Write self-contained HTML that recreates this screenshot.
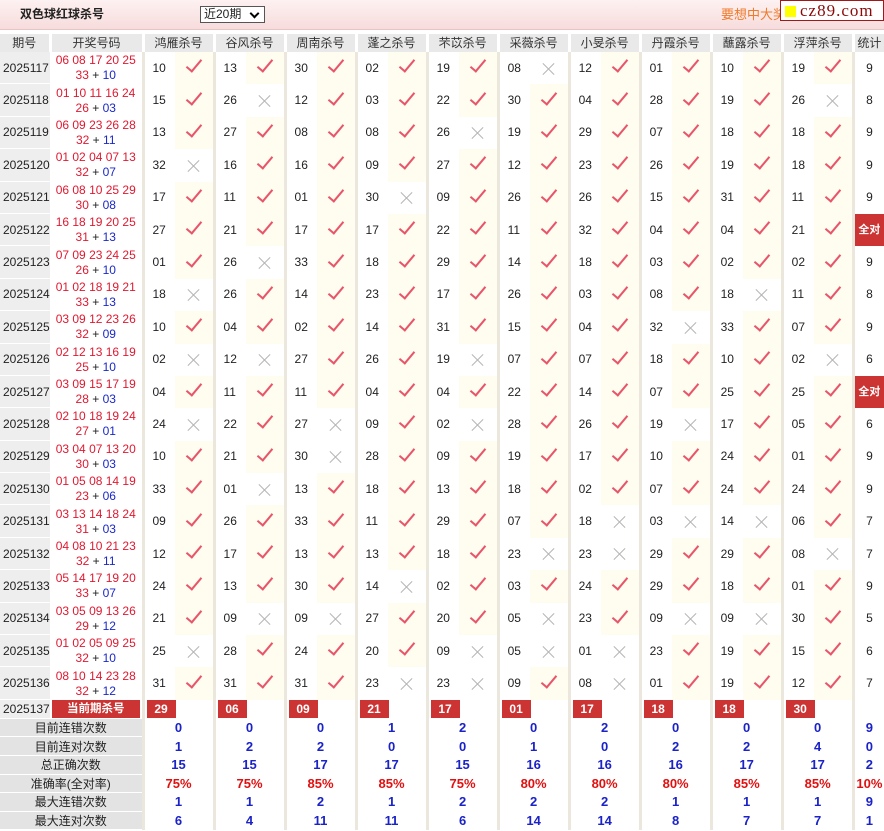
<!DOCTYPE html>
<html><head><meta charset="utf-8"><style>
body{margin:0;width:884px;height:831px;overflow:hidden;background:#fff;font-family:"Liberation Sans","Noto Sans CJK SC",sans-serif;font-size:12px;color:#222;position:relative}
.top{position:absolute;left:0;top:0;width:884px;height:29px;background:linear-gradient(#fdf1f1,#f7dcdc);border-bottom:1px solid #e6c5c5}
.ttl{position:absolute;left:20px;top:6px;font-weight:bold;font-size:12px;color:#222;line-height:16px}
.sel{position:absolute;left:200px;top:6px;width:60px;height:15px;border:1px solid #555;background:#fff;font-size:12px;line-height:15px;padding-left:3px}
.sel:after{content:"";position:absolute;right:6px;top:3px;width:5px;height:5px;border:solid #000;border-width:0 2px 2px 0;transform:rotate(45deg)}
.ad{position:absolute;left:721px;top:7px;color:#f07a2a;font-size:13px;line-height:16px}
.logo{position:absolute;left:780px;top:0;width:102px;height:19px;border:1px solid #a01818;background:#fff;font-family:"Liberation Serif",serif;font-size:17px;color:#8a0a0a;line-height:19px;letter-spacing:1px}
.logo i{display:inline-block;width:11px;height:11px;background:#ffff00;margin:0 4px 0 4px;vertical-align:-1px}
table{position:absolute;left:0;top:34px;border-collapse:collapse;table-layout:fixed;width:884px}
td{padding:0;white-space:nowrap;overflow:hidden}
tr.hd td{height:18px;line-height:16px;background:#e9e9e9;text-align:center;border-left:3px solid #fff;color:#333}
tr.hd td:first-child{border-left:0}
tr.r td{height:32.4px;line-height:15px}
td.q{background:#eeeeee;box-shadow:inset 0 -1px #fff;padding-left:3px;color:#222}
td.k{text-align:center;color:#e01830;font-size:12px}
td.k span{color:#222}
td.k b{font-weight:normal;color:#1a28c8}
td.n{border-left:3px solid #ebe7dc;padding-left:8px}
td.m{text-align:center}
td.y{background:#fffdef}
td.t{text-align:center;border-left:3px solid #ebe7dc}
.c{display:inline-block;width:6px;height:14px;border:solid #e8556a;border-width:0 2px 2px 0;transform:rotate(40deg);margin-top:-4px}
.x{display:inline-block;width:14px;height:14px;position:relative;vertical-align:middle}
.x:before,.x:after{content:"";position:absolute;left:6px;top:-1px;width:1px;height:16px;background:#b5b5b5;transform:rotate(45deg)}
.x:after{transform:rotate(-45deg)}
.qd{display:block;background:#cc3333;color:#fff;font-weight:bold;text-align:center;height:18px;line-height:18px;margin:0 2px;font-size:11.5px}
.all{background:#cc3333;color:#fff;font-weight:bold;font-size:11px}
tr.cur td{height:19px;line-height:18px}
td.rn{border-left:3px solid #ebe7dc;padding-left:2px}
td.rn span{display:inline-block;width:29px;height:18px;background:#cc3333;color:#fff;font-weight:bold;text-align:center;line-height:18px;vertical-align:top}
tr.s td{height:18.6px;line-height:16px;text-align:center}
td.l{background:#e3e3e3;box-shadow:inset 0 -1px #fff;color:#222}
td.v{border-left:3px solid #ebe7dc;color:#1a22c8;font-weight:bold;font-size:13px}
td.p{color:#e01010}
</style></head><body>
<div class="top"><div class="ttl">双色球红球杀号</div><div class="sel">近20期</div><div class="ad">要想中大奖</div></div>
<div class="logo"><i></i>cz89.com</div>
<table>
<colgroup><col style="width:50px"><col style="width:93px"><col style="width:32px"><col style="width:39px"><col style="width:32px"><col style="width:39px"><col style="width:32px"><col style="width:39px"><col style="width:32px"><col style="width:39px"><col style="width:32px"><col style="width:39px"><col style="width:32px"><col style="width:39px"><col style="width:32px"><col style="width:39px"><col style="width:32px"><col style="width:39px"><col style="width:32px"><col style="width:39px"><col style="width:32px"><col style="width:39px"><col style="width:31px"></colgroup>
<tr class="hd"><td>期号</td><td>开奖号码</td><td colspan="2">鸿雁杀号</td><td colspan="2">谷风杀号</td><td colspan="2">周南杀号</td><td colspan="2">蓬之杀号</td><td colspan="2">芣苡杀号</td><td colspan="2">采薇杀号</td><td colspan="2">小旻杀号</td><td colspan="2">丹霞杀号</td><td colspan="2">蘸露杀号</td><td colspan="2">浮萍杀号</td><td>统计</td></tr>

<tr class="r"><td class="q">2025117</td><td class="k">06 08 17 20 25<br>33 <span>+</span> <b>10</b></td><td class="n">10</td><td class="m y"><i class="c"></i></td><td class="n">13</td><td class="m y"><i class="c"></i></td><td class="n">30</td><td class="m y"><i class="c"></i></td><td class="n">02</td><td class="m y"><i class="c"></i></td><td class="n">19</td><td class="m y"><i class="c"></i></td><td class="n">08</td><td class="m"><i class="x"></i></td><td class="n">12</td><td class="m y"><i class="c"></i></td><td class="n">01</td><td class="m y"><i class="c"></i></td><td class="n">10</td><td class="m y"><i class="c"></i></td><td class="n">19</td><td class="m y"><i class="c"></i></td><td class="t">9</td></tr>
<tr class="r"><td class="q">2025118</td><td class="k">01 10 11 16 24<br>26 <span>+</span> <b>03</b></td><td class="n">15</td><td class="m y"><i class="c"></i></td><td class="n">26</td><td class="m"><i class="x"></i></td><td class="n">12</td><td class="m y"><i class="c"></i></td><td class="n">03</td><td class="m y"><i class="c"></i></td><td class="n">22</td><td class="m y"><i class="c"></i></td><td class="n">30</td><td class="m y"><i class="c"></i></td><td class="n">04</td><td class="m y"><i class="c"></i></td><td class="n">28</td><td class="m y"><i class="c"></i></td><td class="n">19</td><td class="m y"><i class="c"></i></td><td class="n">26</td><td class="m"><i class="x"></i></td><td class="t">8</td></tr>
<tr class="r"><td class="q">2025119</td><td class="k">06 09 23 26 28<br>32 <span>+</span> <b>11</b></td><td class="n">13</td><td class="m y"><i class="c"></i></td><td class="n">27</td><td class="m y"><i class="c"></i></td><td class="n">08</td><td class="m y"><i class="c"></i></td><td class="n">08</td><td class="m y"><i class="c"></i></td><td class="n">26</td><td class="m"><i class="x"></i></td><td class="n">19</td><td class="m y"><i class="c"></i></td><td class="n">29</td><td class="m y"><i class="c"></i></td><td class="n">07</td><td class="m y"><i class="c"></i></td><td class="n">18</td><td class="m y"><i class="c"></i></td><td class="n">18</td><td class="m y"><i class="c"></i></td><td class="t">9</td></tr>
<tr class="r"><td class="q">2025120</td><td class="k">01 02 04 07 13<br>32 <span>+</span> <b>07</b></td><td class="n">32</td><td class="m"><i class="x"></i></td><td class="n">16</td><td class="m y"><i class="c"></i></td><td class="n">16</td><td class="m y"><i class="c"></i></td><td class="n">09</td><td class="m y"><i class="c"></i></td><td class="n">27</td><td class="m y"><i class="c"></i></td><td class="n">12</td><td class="m y"><i class="c"></i></td><td class="n">23</td><td class="m y"><i class="c"></i></td><td class="n">26</td><td class="m y"><i class="c"></i></td><td class="n">19</td><td class="m y"><i class="c"></i></td><td class="n">18</td><td class="m y"><i class="c"></i></td><td class="t">9</td></tr>
<tr class="r"><td class="q">2025121</td><td class="k">06 08 10 25 29<br>30 <span>+</span> <b>08</b></td><td class="n">17</td><td class="m y"><i class="c"></i></td><td class="n">11</td><td class="m y"><i class="c"></i></td><td class="n">01</td><td class="m y"><i class="c"></i></td><td class="n">30</td><td class="m"><i class="x"></i></td><td class="n">09</td><td class="m y"><i class="c"></i></td><td class="n">26</td><td class="m y"><i class="c"></i></td><td class="n">26</td><td class="m y"><i class="c"></i></td><td class="n">15</td><td class="m y"><i class="c"></i></td><td class="n">31</td><td class="m y"><i class="c"></i></td><td class="n">11</td><td class="m y"><i class="c"></i></td><td class="t">9</td></tr>
<tr class="r"><td class="q">2025122</td><td class="k">16 18 19 20 25<br>31 <span>+</span> <b>13</b></td><td class="n">27</td><td class="m y"><i class="c"></i></td><td class="n">21</td><td class="m y"><i class="c"></i></td><td class="n">17</td><td class="m y"><i class="c"></i></td><td class="n">17</td><td class="m y"><i class="c"></i></td><td class="n">22</td><td class="m y"><i class="c"></i></td><td class="n">11</td><td class="m y"><i class="c"></i></td><td class="n">32</td><td class="m y"><i class="c"></i></td><td class="n">04</td><td class="m y"><i class="c"></i></td><td class="n">04</td><td class="m y"><i class="c"></i></td><td class="n">21</td><td class="m y"><i class="c"></i></td><td class="t all">全对</td></tr>
<tr class="r"><td class="q">2025123</td><td class="k">07 09 23 24 25<br>26 <span>+</span> <b>10</b></td><td class="n">01</td><td class="m y"><i class="c"></i></td><td class="n">26</td><td class="m"><i class="x"></i></td><td class="n">33</td><td class="m y"><i class="c"></i></td><td class="n">18</td><td class="m y"><i class="c"></i></td><td class="n">29</td><td class="m y"><i class="c"></i></td><td class="n">14</td><td class="m y"><i class="c"></i></td><td class="n">18</td><td class="m y"><i class="c"></i></td><td class="n">03</td><td class="m y"><i class="c"></i></td><td class="n">02</td><td class="m y"><i class="c"></i></td><td class="n">02</td><td class="m y"><i class="c"></i></td><td class="t">9</td></tr>
<tr class="r"><td class="q">2025124</td><td class="k">01 02 18 19 21<br>33 <span>+</span> <b>13</b></td><td class="n">18</td><td class="m"><i class="x"></i></td><td class="n">26</td><td class="m y"><i class="c"></i></td><td class="n">14</td><td class="m y"><i class="c"></i></td><td class="n">23</td><td class="m y"><i class="c"></i></td><td class="n">17</td><td class="m y"><i class="c"></i></td><td class="n">26</td><td class="m y"><i class="c"></i></td><td class="n">03</td><td class="m y"><i class="c"></i></td><td class="n">08</td><td class="m y"><i class="c"></i></td><td class="n">18</td><td class="m"><i class="x"></i></td><td class="n">11</td><td class="m y"><i class="c"></i></td><td class="t">8</td></tr>
<tr class="r"><td class="q">2025125</td><td class="k">03 09 12 23 26<br>32 <span>+</span> <b>09</b></td><td class="n">10</td><td class="m y"><i class="c"></i></td><td class="n">04</td><td class="m y"><i class="c"></i></td><td class="n">02</td><td class="m y"><i class="c"></i></td><td class="n">14</td><td class="m y"><i class="c"></i></td><td class="n">31</td><td class="m y"><i class="c"></i></td><td class="n">15</td><td class="m y"><i class="c"></i></td><td class="n">04</td><td class="m y"><i class="c"></i></td><td class="n">32</td><td class="m"><i class="x"></i></td><td class="n">33</td><td class="m y"><i class="c"></i></td><td class="n">07</td><td class="m y"><i class="c"></i></td><td class="t">9</td></tr>
<tr class="r"><td class="q">2025126</td><td class="k">02 12 13 16 19<br>25 <span>+</span> <b>10</b></td><td class="n">02</td><td class="m"><i class="x"></i></td><td class="n">12</td><td class="m"><i class="x"></i></td><td class="n">27</td><td class="m y"><i class="c"></i></td><td class="n">26</td><td class="m y"><i class="c"></i></td><td class="n">19</td><td class="m"><i class="x"></i></td><td class="n">07</td><td class="m y"><i class="c"></i></td><td class="n">07</td><td class="m y"><i class="c"></i></td><td class="n">18</td><td class="m y"><i class="c"></i></td><td class="n">10</td><td class="m y"><i class="c"></i></td><td class="n">02</td><td class="m"><i class="x"></i></td><td class="t">6</td></tr>
<tr class="r"><td class="q">2025127</td><td class="k">03 09 15 17 19<br>28 <span>+</span> <b>03</b></td><td class="n">04</td><td class="m y"><i class="c"></i></td><td class="n">11</td><td class="m y"><i class="c"></i></td><td class="n">11</td><td class="m y"><i class="c"></i></td><td class="n">04</td><td class="m y"><i class="c"></i></td><td class="n">04</td><td class="m y"><i class="c"></i></td><td class="n">22</td><td class="m y"><i class="c"></i></td><td class="n">14</td><td class="m y"><i class="c"></i></td><td class="n">07</td><td class="m y"><i class="c"></i></td><td class="n">25</td><td class="m y"><i class="c"></i></td><td class="n">25</td><td class="m y"><i class="c"></i></td><td class="t all">全对</td></tr>
<tr class="r"><td class="q">2025128</td><td class="k">02 10 18 19 24<br>27 <span>+</span> <b>01</b></td><td class="n">24</td><td class="m"><i class="x"></i></td><td class="n">22</td><td class="m y"><i class="c"></i></td><td class="n">27</td><td class="m"><i class="x"></i></td><td class="n">09</td><td class="m y"><i class="c"></i></td><td class="n">02</td><td class="m"><i class="x"></i></td><td class="n">28</td><td class="m y"><i class="c"></i></td><td class="n">26</td><td class="m y"><i class="c"></i></td><td class="n">19</td><td class="m"><i class="x"></i></td><td class="n">17</td><td class="m y"><i class="c"></i></td><td class="n">05</td><td class="m y"><i class="c"></i></td><td class="t">6</td></tr>
<tr class="r"><td class="q">2025129</td><td class="k">03 04 07 13 20<br>30 <span>+</span> <b>03</b></td><td class="n">10</td><td class="m y"><i class="c"></i></td><td class="n">21</td><td class="m y"><i class="c"></i></td><td class="n">30</td><td class="m"><i class="x"></i></td><td class="n">28</td><td class="m y"><i class="c"></i></td><td class="n">09</td><td class="m y"><i class="c"></i></td><td class="n">19</td><td class="m y"><i class="c"></i></td><td class="n">17</td><td class="m y"><i class="c"></i></td><td class="n">10</td><td class="m y"><i class="c"></i></td><td class="n">24</td><td class="m y"><i class="c"></i></td><td class="n">01</td><td class="m y"><i class="c"></i></td><td class="t">9</td></tr>
<tr class="r"><td class="q">2025130</td><td class="k">01 05 08 14 19<br>23 <span>+</span> <b>06</b></td><td class="n">33</td><td class="m y"><i class="c"></i></td><td class="n">01</td><td class="m"><i class="x"></i></td><td class="n">13</td><td class="m y"><i class="c"></i></td><td class="n">18</td><td class="m y"><i class="c"></i></td><td class="n">13</td><td class="m y"><i class="c"></i></td><td class="n">18</td><td class="m y"><i class="c"></i></td><td class="n">02</td><td class="m y"><i class="c"></i></td><td class="n">07</td><td class="m y"><i class="c"></i></td><td class="n">24</td><td class="m y"><i class="c"></i></td><td class="n">24</td><td class="m y"><i class="c"></i></td><td class="t">9</td></tr>
<tr class="r"><td class="q">2025131</td><td class="k">03 13 14 18 24<br>31 <span>+</span> <b>03</b></td><td class="n">09</td><td class="m y"><i class="c"></i></td><td class="n">26</td><td class="m y"><i class="c"></i></td><td class="n">33</td><td class="m y"><i class="c"></i></td><td class="n">11</td><td class="m y"><i class="c"></i></td><td class="n">29</td><td class="m y"><i class="c"></i></td><td class="n">07</td><td class="m y"><i class="c"></i></td><td class="n">18</td><td class="m"><i class="x"></i></td><td class="n">03</td><td class="m"><i class="x"></i></td><td class="n">14</td><td class="m"><i class="x"></i></td><td class="n">06</td><td class="m y"><i class="c"></i></td><td class="t">7</td></tr>
<tr class="r"><td class="q">2025132</td><td class="k">04 08 10 21 23<br>32 <span>+</span> <b>11</b></td><td class="n">12</td><td class="m y"><i class="c"></i></td><td class="n">17</td><td class="m y"><i class="c"></i></td><td class="n">13</td><td class="m y"><i class="c"></i></td><td class="n">13</td><td class="m y"><i class="c"></i></td><td class="n">18</td><td class="m y"><i class="c"></i></td><td class="n">23</td><td class="m"><i class="x"></i></td><td class="n">23</td><td class="m"><i class="x"></i></td><td class="n">29</td><td class="m y"><i class="c"></i></td><td class="n">29</td><td class="m y"><i class="c"></i></td><td class="n">08</td><td class="m"><i class="x"></i></td><td class="t">7</td></tr>
<tr class="r"><td class="q">2025133</td><td class="k">05 14 17 19 20<br>33 <span>+</span> <b>07</b></td><td class="n">24</td><td class="m y"><i class="c"></i></td><td class="n">13</td><td class="m y"><i class="c"></i></td><td class="n">30</td><td class="m y"><i class="c"></i></td><td class="n">14</td><td class="m"><i class="x"></i></td><td class="n">02</td><td class="m y"><i class="c"></i></td><td class="n">03</td><td class="m y"><i class="c"></i></td><td class="n">24</td><td class="m y"><i class="c"></i></td><td class="n">29</td><td class="m y"><i class="c"></i></td><td class="n">18</td><td class="m y"><i class="c"></i></td><td class="n">01</td><td class="m y"><i class="c"></i></td><td class="t">9</td></tr>
<tr class="r"><td class="q">2025134</td><td class="k">03 05 09 13 26<br>29 <span>+</span> <b>12</b></td><td class="n">21</td><td class="m y"><i class="c"></i></td><td class="n">09</td><td class="m"><i class="x"></i></td><td class="n">09</td><td class="m"><i class="x"></i></td><td class="n">27</td><td class="m y"><i class="c"></i></td><td class="n">20</td><td class="m y"><i class="c"></i></td><td class="n">05</td><td class="m"><i class="x"></i></td><td class="n">23</td><td class="m y"><i class="c"></i></td><td class="n">09</td><td class="m"><i class="x"></i></td><td class="n">09</td><td class="m"><i class="x"></i></td><td class="n">30</td><td class="m y"><i class="c"></i></td><td class="t">5</td></tr>
<tr class="r"><td class="q">2025135</td><td class="k">01 02 05 09 25<br>32 <span>+</span> <b>10</b></td><td class="n">25</td><td class="m"><i class="x"></i></td><td class="n">28</td><td class="m y"><i class="c"></i></td><td class="n">24</td><td class="m y"><i class="c"></i></td><td class="n">20</td><td class="m y"><i class="c"></i></td><td class="n">09</td><td class="m"><i class="x"></i></td><td class="n">05</td><td class="m"><i class="x"></i></td><td class="n">01</td><td class="m"><i class="x"></i></td><td class="n">23</td><td class="m y"><i class="c"></i></td><td class="n">19</td><td class="m y"><i class="c"></i></td><td class="n">15</td><td class="m y"><i class="c"></i></td><td class="t">6</td></tr>
<tr class="r"><td class="q">2025136</td><td class="k">08 10 14 23 28<br>32 <span>+</span> <b>12</b></td><td class="n">31</td><td class="m y"><i class="c"></i></td><td class="n">31</td><td class="m y"><i class="c"></i></td><td class="n">31</td><td class="m y"><i class="c"></i></td><td class="n">23</td><td class="m"><i class="x"></i></td><td class="n">23</td><td class="m"><i class="x"></i></td><td class="n">09</td><td class="m y"><i class="c"></i></td><td class="n">08</td><td class="m"><i class="x"></i></td><td class="n">01</td><td class="m y"><i class="c"></i></td><td class="n">19</td><td class="m y"><i class="c"></i></td><td class="n">12</td><td class="m y"><i class="c"></i></td><td class="t">7</td></tr>

<tr class="cur"><td class="q">2025137</td><td><span class="qd">当前期杀号</span></td><td class="rn" colspan="2"><span>29</span></td><td class="rn" colspan="2"><span>06</span></td><td class="rn" colspan="2"><span>09</span></td><td class="rn" colspan="2"><span>21</span></td><td class="rn" colspan="2"><span>17</span></td><td class="rn" colspan="2"><span>01</span></td><td class="rn" colspan="2"><span>17</span></td><td class="rn" colspan="2"><span>18</span></td><td class="rn" colspan="2"><span>18</span></td><td class="rn" colspan="2"><span>30</span></td><td class="t"></td></tr>

<tr class="s"><td class="l" colspan="2">目前连错次数</td><td class="v" colspan="2">0</td><td class="v" colspan="2">0</td><td class="v" colspan="2">0</td><td class="v" colspan="2">1</td><td class="v" colspan="2">2</td><td class="v" colspan="2">0</td><td class="v" colspan="2">2</td><td class="v" colspan="2">0</td><td class="v" colspan="2">0</td><td class="v" colspan="2">0</td><td class="v">9</td></tr>
<tr class="s"><td class="l" colspan="2">目前连对次数</td><td class="v" colspan="2">1</td><td class="v" colspan="2">2</td><td class="v" colspan="2">2</td><td class="v" colspan="2">0</td><td class="v" colspan="2">0</td><td class="v" colspan="2">1</td><td class="v" colspan="2">0</td><td class="v" colspan="2">2</td><td class="v" colspan="2">2</td><td class="v" colspan="2">4</td><td class="v">0</td></tr>
<tr class="s"><td class="l" colspan="2">总正确次数</td><td class="v" colspan="2">15</td><td class="v" colspan="2">15</td><td class="v" colspan="2">17</td><td class="v" colspan="2">17</td><td class="v" colspan="2">15</td><td class="v" colspan="2">16</td><td class="v" colspan="2">16</td><td class="v" colspan="2">16</td><td class="v" colspan="2">17</td><td class="v" colspan="2">17</td><td class="v">2</td></tr>
<tr class="s"><td class="l" colspan="2">准确率(全对率)</td><td class="v p" colspan="2">75%</td><td class="v p" colspan="2">75%</td><td class="v p" colspan="2">85%</td><td class="v p" colspan="2">85%</td><td class="v p" colspan="2">75%</td><td class="v p" colspan="2">80%</td><td class="v p" colspan="2">80%</td><td class="v p" colspan="2">80%</td><td class="v p" colspan="2">85%</td><td class="v p" colspan="2">85%</td><td class="v p">10%</td></tr>
<tr class="s"><td class="l" colspan="2">最大连错次数</td><td class="v" colspan="2">1</td><td class="v" colspan="2">1</td><td class="v" colspan="2">2</td><td class="v" colspan="2">1</td><td class="v" colspan="2">2</td><td class="v" colspan="2">2</td><td class="v" colspan="2">2</td><td class="v" colspan="2">1</td><td class="v" colspan="2">1</td><td class="v" colspan="2">1</td><td class="v">9</td></tr>
<tr class="s"><td class="l" colspan="2">最大连对次数</td><td class="v" colspan="2">6</td><td class="v" colspan="2">4</td><td class="v" colspan="2">11</td><td class="v" colspan="2">11</td><td class="v" colspan="2">6</td><td class="v" colspan="2">14</td><td class="v" colspan="2">14</td><td class="v" colspan="2">8</td><td class="v" colspan="2">7</td><td class="v" colspan="2">7</td><td class="v">1</td></tr>
</table>
</body></html>
